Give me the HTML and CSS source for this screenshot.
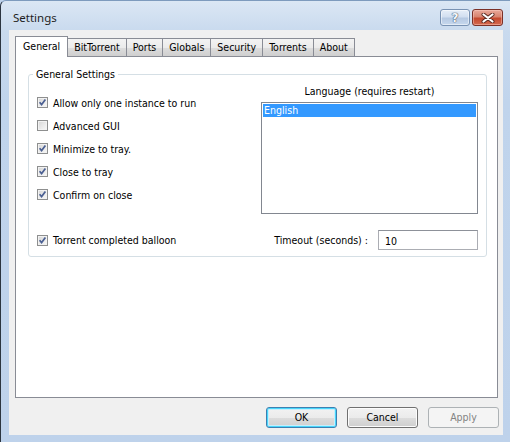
FILE: index.html
```html
<!DOCTYPE html>
<html>
<head>
<meta charset="utf-8">
<link rel="stylesheet" href="styles.css">
</head>
<body>
<div class="window">
  <div class="titlebar">
    <div class="title">Settings</div>
    <div class="caption-buttons">
      <div class="cap help"><span class="qmark">?</span></div>
      <div class="cap close">
        <svg width="14" height="10" viewBox="0 0 14 10">
          <path d="M2.5 1.5 L11.5 8.5 M11.5 1.5 L2.5 8.5" stroke="#5a2a22" stroke-width="4" stroke-linecap="round"/>
          <path d="M2.5 1.5 L11.5 8.5 M11.5 1.5 L2.5 8.5" stroke="#ffffff" stroke-width="2.2" stroke-linecap="round"/>
        </svg>
      </div>
    </div>
  </div>
  <div class="client">
    <div class="tabs">
      <div class="tab selected">General</div>
      <div class="tab">BitTorrent</div>
      <div class="tab">Ports</div>
      <div class="tab">Globals</div>
      <div class="tab">Security</div>
      <div class="tab">Torrents</div>
      <div class="tab">About</div>
    </div>
    <div class="panel">
      <div class="group">
        <div class="group-label">General Settings</div>
        <div class="group-body">
          <div class="checks">
            <label class="check"><span class="cb on"><svg viewBox="0 0 11 11"><path d="M2.6 5.2 L4.6 7.6 L8.4 2.6"/></svg></span>Allow only one instance to run</label>
            <label class="check"><span class="cb"></span>Advanced GUI</label>
            <label class="check"><span class="cb on"><svg viewBox="0 0 11 11"><path d="M2.6 5.2 L4.6 7.6 L8.4 2.6"/></svg></span>Minimize to tray.</label>
            <label class="check"><span class="cb on"><svg viewBox="0 0 11 11"><path d="M2.6 5.2 L4.6 7.6 L8.4 2.6"/></svg></span>Close to tray</label>
            <label class="check"><span class="cb on"><svg viewBox="0 0 11 11"><path d="M2.6 5.2 L4.6 7.6 L8.4 2.6"/></svg></span>Confirm on close</label>
          </div>
          <div class="language">
            <div class="lang-label">Language (requires restart)</div>
            <div class="listbox">
              <div class="item selected">English</div>
            </div>
          </div>
          <label class="check bottom-check"><span class="cb on"><svg viewBox="0 0 11 11"><path d="M2.6 5.2 L4.6 7.6 L8.4 2.6"/></svg></span>Torrent completed balloon</label>
          <div class="timeout">
            <span class="timeout-label">Timeout (seconds) :</span>
            <div class="textbox">10</div>
          </div>
        </div>
      </div>
    </div>
    <div class="buttons">
      <div class="btn default">OK</div>
      <div class="btn">Cancel</div>
      <div class="btn disabled">Apply</div>
    </div>
  </div>
</div>
</body>
</html>
```

FILE: styles.css
```css
html, body {
  margin: 0;
  padding: 0;
}
body {
  width: 510px;
  height: 442px;
  overflow: hidden;
  font-family: "DejaVu Sans Condensed", "DejaVu Sans", sans-serif;
  font-size: 10.5px;
  color: #000;
  background: #bfd3ec;
}
.window {
  box-sizing: border-box;
  width: 510px;
  height: 442px;
  display: flex;
  flex-direction: column;
  border-left: 1px solid #2c3540;
  border-top: 1px solid #7e9bbd;
  border-top-left-radius: 6px;
  background: linear-gradient(#dbe7f4 0px, #c9daee 30px, #c0d4ec 100px, #bed2eb 442px);
}
.titlebar {
  height: 29px;
  display: flex;
  justify-content: space-between;
  align-items: flex-start;
  padding: 0 7px 0 12px;
}
.title {
  font-family: "Noto Sans", "Open Sans", sans-serif;
  font-size: 11.5px;
  line-height: 16px;
  margin-top: 9px;
  color: #1e1e1e;
}
.caption-buttons {
  display: flex;
  gap: 2px;
  margin-top: 8px;
}
.cap {
  box-sizing: border-box;
  width: 30px;
  height: 17px;
  border-radius: 3px;
  display: flex;
  align-items: center;
  justify-content: center;
}
.help {
  border: 1px solid #7892b3;
  background: linear-gradient(#e6eef8 0%, #d2dff0 45%, #b6c9e2 55%, #c6d8ee 100%);
  box-shadow: inset 0 0 0 1px rgba(255,255,255,0.5);
}
.qmark {
  font-family: "DejaVu Sans", sans-serif;
  font-weight: bold;
  font-size: 12px;
  line-height: 14px;
  color: #f4f7fb;
  text-shadow: 0 0 1px #4c5a6e, 0 0 1px #4c5a6e, 0 0 1px #4c5a6e;
}
.close {
  width: 31px;
  border: 1px solid #7b3128;
  background: linear-gradient(#e9a99b 0%, #d88470 45%, #c4492f 55%, #d46a50 100%);
  box-shadow: inset 0 0 0 1px rgba(255,210,200,0.45);
}
.client {
  flex: 1;
  margin: 0 7px 7px 8px;
  background: #f0f0f0;
  padding: 6px 5px 0 6px;
  display: flex;
  flex-direction: column;
}
.tabs {
  display: flex;
  align-items: flex-end;
  height: 20px;
  position: relative;
  z-index: 1;
}
.tab {
  box-sizing: border-box;
  height: 18px;
  padding: 0 6px;
  border: 1px solid #898c95;
  border-bottom: none;
  margin-left: -1px;
  background: linear-gradient(#f3f3f3, #ebebeb 50%, #dddddd 51%, #cfcfcf);
  line-height: 17px;
  color: #000;
  white-space: nowrap;
}
.tab.selected {
  margin-left: 0;
  height: 21px;
  margin-bottom: -1px;
  padding: 0 7px;
  background: #ffffff;
  position: relative;
  z-index: 2;
  line-height: 19px;
}
.panel {
  box-sizing: border-box;
  height: 342px;
  border: 1px solid #898c95;
  background: #ffffff;
  padding: 17px 10px 0 12px;
}
.group {
  position: relative;
  border: 1px solid #d5dfe5;
  border-radius: 3px;
  padding: 9px 8px 6px 8px;
}
.group-label {
  position: absolute;
  top: -8px;
  left: 4px;
  padding: 0 3px;
  background: #ffffff;
  line-height: 14px;
}
.group-body {
  display: grid;
  grid-template-columns: 1fr 217px;
  grid-template-rows: 130px 20px;
  row-gap: 16px;
}
.checks {
  padding-top: 7px;
  display: flex;
  flex-direction: column;
}
.check {
  height: 23px;
  display: flex;
  align-items: center;
  gap: 5px;
  white-space: nowrap;
}
.bottom-check {
  height: 20px;
}
.cb {
  box-sizing: border-box;
  width: 11px;
  height: 11px;
  border: 1px solid #8e8f8f;
  background: linear-gradient(135deg, #d4d4d4 0%, #e8e8e8 50%, #f8f8f8 100%);
  box-shadow: inset 0 0 0 1px #f2f2f2;
  position: relative;
  flex: none;
}
.cb svg {
  position: absolute;
  left: -1px;
  top: -1px;
  width: 11px;
  height: 11px;
}
.cb svg path {
  fill: none;
  stroke: #4a5f92;
  stroke-width: 1.7;
}
.language {
  display: flex;
  flex-direction: column;
}
.lang-label {
  text-align: center;
  line-height: 14px;
  height: 14px;
  margin-bottom: 4px;
}
.listbox {
  box-sizing: border-box;
  height: 112px;
  border: 1px solid #828790;
  background: #ffffff;
  padding: 1px;
}
.item {
  line-height: 13px;
  height: 13px;
  padding-left: 1px;
}
.item.selected {
  background: #3399ff;
  color: #ffffff;
}
.timeout {
  display: flex;
  justify-content: flex-end;
  align-items: center;
  gap: 10px;
}
.textbox {
  box-sizing: border-box;
  width: 100px;
  height: 20px;
  border: 1px solid #abadb3;
  border-top-color: #8d9199;
  background: #ffffff;
  padding-left: 6px;
  line-height: 19px;
  padding-top: 1px;
}
.buttons {
  display: flex;
  justify-content: flex-end;
  gap: 10px;
  padding: 9px 0 0 0;
  margin-right: -1px;
}
.btn {
  box-sizing: border-box;
  width: 71px;
  height: 21px;
  border: 1px solid #707070;
  border-radius: 3px;
  background: linear-gradient(#f2f2f2, #ebebeb 50%, #dddddd 51%, #cfcfcf);
  box-shadow: inset 0 0 0 1px #fcfcfc;
  text-align: center;
  line-height: 19px;
}
.btn.default {
  border-color: #3c7fb1;
  box-shadow: inset 0 0 0 1px #48d6fb, inset 0 0 0 2px #c6eefc;
}
.btn.disabled {
  border-color: #adb2b5;
  background: #f4f4f4;
  box-shadow: none;
  color: #838383;
}
```
